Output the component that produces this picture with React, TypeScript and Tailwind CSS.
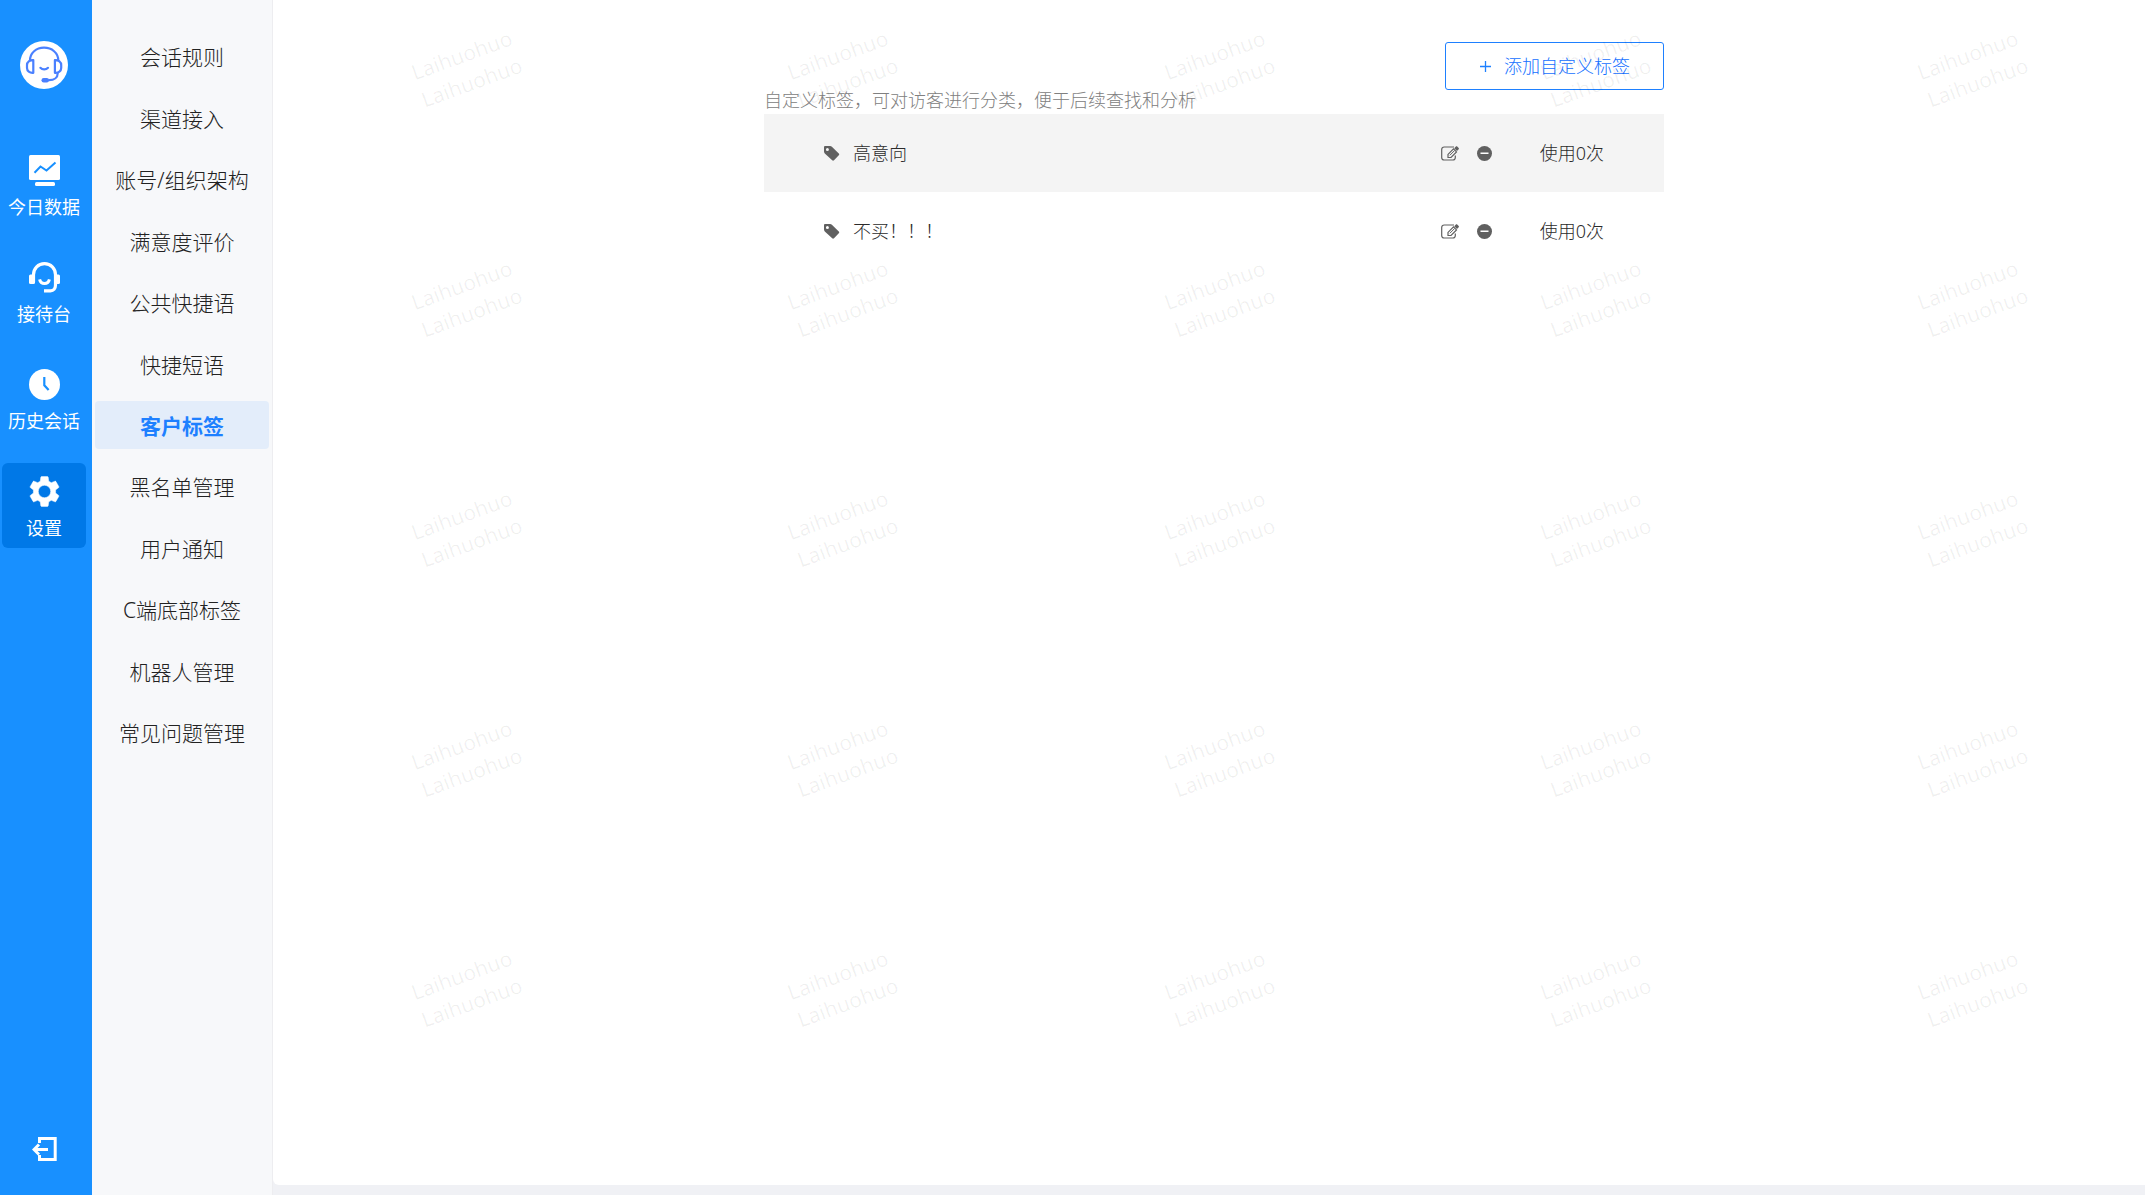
import React from 'react';

const fontStack = "font-['Noto_Sans','Noto_Sans_CJK_SC',sans-serif]";

function AvatarIcon() {
  return (
    <svg viewBox="0 0 48 48" className="size-12" fill="none" aria-hidden="true">
      <circle cx="24" cy="24" r="24" fill="#fff" />
      <g stroke="#4a80ff" strokeWidth="2.200" strokeLinecap="round" strokeLinejoin="round">
        <path d="M10 19.5C10 11.8 16.2 6.7 24 6.7S38.300 11.800 38.300 19.500" />
        <path d="M13.300 19.200v12.600c-3.600.4-6.300-1.800-6.300-4.800v-3c0-3 2.700-5.200 6.300-4.800z" />
        <path d="M34.900 19.200v12.600c3.600.4 6.300-1.800 6.300-4.800v-3c0-3-2.700-5.200-6.300-4.800z" />
        <path d="M20.400 26.800c2 2.200 5.600 2.200 7.600 0" />
        <path d="M37.700 32.200c0 4-3.200 7-8.700 7" />
      </g>
      <rect x="21.500" y="37" width="7.500" height="4.400" rx="2.200" fill="#4a80ff" />
    </svg>
  );
}

function ChartIcon() {
  return (
    <svg viewBox="0 0 31 31" className="size-[31px]" fill="none" aria-hidden="true">
      <rect x="0" y="0" width="31" height="25" rx="1.500" fill="#fff" />
      <rect x="6" y="27" width="20" height="4" rx="1.500" fill="#fff" />
      <path d="M5.500 17.800l6-6.300 6 4L26.500 7.500" stroke="#1890ff" strokeWidth="2" />
    </svg>
  );
}

function HeadsetIcon() {
  return (
    <svg viewBox="0 0 31 31" className="size-[31px]" fill="none" stroke="#fff" aria-hidden="true">
      <path d="M4.500 20V12.800C4.500 6.500 9.200 1.600 15.500 1.600S26.500 6.500 26.500 12.800V23c0 3.500-2 5.800-5 5.800h-6.500" strokeWidth="3.200" />
      <rect x="0" y="12.500" width="6" height="9.500" rx="1.500" fill="#fff" stroke="none" />
      <rect x="25" y="12.500" width="6" height="9.500" rx="1.500" fill="#fff" stroke="none" />
      <path d="M10.600 17.300c.6 2.700 2.500 4.200 4.900 4.200s4.300-1.500 4.900-4.200" strokeWidth="3" />
    </svg>
  );
}

function ClockIcon() {
  return (
    <svg viewBox="0 0 31 31" className="size-[31px]" fill="none" aria-hidden="true">
      <circle cx="15.500" cy="15.500" r="15.500" fill="#fff" />
      <path d="M15.300 8v8.300l4.300 4.800" stroke="#1890ff" strokeWidth="2.200" />
    </svg>
  );
}

function GearIcon() {
  return (
    <svg viewBox="2.2 2 19.600 20" className="size-[31px]" fill="#fff" aria-hidden="true">
      <path d="M19.140 12.940c.04-.3.06-.61.06-.94 0-.32-.02-.64-.07-.94l2.030-1.580c.18-.14.23-.41.12-.61l-1.920-3.320c-.12-.22-.37-.29-.59-.22l-2.390.96c-.5-.38-1.030-.7-1.620-.94l-.36-2.540c-.04-.24-.24-.41-.48-.41h-3.840c-.24 0-.43.17-.47.41l-.36 2.540c-.59.24-1.130.57-1.620.94l-2.390-.96c-.22-.08-.47 0-.59.22L2.740 8.870c-.12.21-.08.47.12.61l2.030 1.580c-.05.3-.09.63-.09.94s.02.64.07.94l-2.030 1.580c-.18.14-.23.41-.12.61l1.920 3.320c.12.22.37.29.59.22l2.390-.96c.5.38 1.030.7 1.620.94l.36 2.540c.05.24.24.41.48.41h3.840c.24 0 .44-.17.47-.41l.36-2.540c.59-.24 1.130-.56 1.620-.94l2.390.96c.22.08.47 0 .59-.22l1.920-3.320c.12-.22.07-.47-.12-.61l-2.010-1.580zM12 16a4 4 0 1 1 0-8 4 4 0 0 1 0 8z" stroke="#fff" strokeWidth=".3" />
    </svg>
  );
}

function LogoutIcon() {
  return (
    <svg viewBox="0 0 25 24" className="h-6 w-[25px]" fill="none" stroke="#fff" aria-hidden="true">
      <path d="M7.500 6V1.500h15.700v21H7.500V18" strokeWidth="3" />
      <path d="M16 12.500H3" strokeWidth="3" />
      <path d="M7 7.500L2 12.500l5 5" strokeWidth="3" />
    </svg>
  );
}

function TagIcon() {
  return (
    <svg viewBox="0 0 16 15" className="h-[15px] w-4 shrink-0" aria-hidden="true">
      <path
        fill="#606060"
        fillRule="evenodd"
        d="M1.200 0H6c.7 0 1.400.3 1.900.8l6.900 6.700c.6.6.6 1.200 0 1.800l-4.800 4.900c-.6.6-1.200.6-1.800 0L.8 7.400C.3 6.900 0 6.200 0 5.500V1.200C0 .5.500 0 1.200 0zM3.400 1.900a1.500 1.500 0 1 0 0 3 1.500 1.500 0 0 0 0-3z"
      />
    </svg>
  );
}

function EditIcon() {
  return (
    <svg viewBox="0 0 19 15" className="h-[15px] w-[19px]" fill="none" stroke="#606060" aria-hidden="true">
      <path d="M13 1H3.200C1.700 1 .7 2 .7 3.500v8c0 1.500 1 2.500 2.500 2.500h8.600c1.500 0 2.500-1 2.500-2.500V9.500" strokeWidth="1.200" />
      <path d="M7 11.500V8.400l5.500-5.500 3 3L10 11.500z" strokeWidth="1.200" />
      <path d="M8.800 9.300l4.700-4.700" strokeWidth="1" />
      <path d="M13.200 2.200l1.700-1.700c.4-.4.900-.4 1.300 0l1.500 1.500c.4.4.4.900 0 1.300L16 5z" fill="#606060" stroke="none" />
    </svg>
  );
}

function MinusIcon() {
  return (
    <svg viewBox="0 0 15 15" className="size-[15px]" aria-hidden="true">
      <circle cx="7.500" cy="7.500" r="7.500" fill="#606060" />
      <rect x="3.500" y="6.500" width="8" height="1.500" fill="#fff" />
    </svg>
  );
}

const navItems = [
  { label: '今日数据', icon: <ChartIcon /> },
  { label: '接待台', icon: <HeadsetIcon /> },
  { label: '历史会话', icon: <ClockIcon /> },
  { label: '设置', icon: <GearIcon />, active: true },
];

const menuItems = [
  '会话规则',
  '渠道接入',
  '账号/组织架构',
  '满意度评价',
  '公共快捷语',
  '快捷短语',
  '客户标签',
  '黑名单管理',
  '用户通知',
  'C端底部标签',
  '机器人管理',
  '常见问题管理',
];

const tags = [
  { name: '高意向', count: 0 },
  { name: '不买！！！', count: 0 },
];

function Watermark() {
  return (
    <div
      aria-hidden="true"
      className="pointer-events-none absolute inset-y-0 left-0 -right-2.5 grid grid-cols-5 content-start select-none"
    >
      {Array.from({ length: 25 }, (_, i) => (
        <div key={i} className="flex h-[230px] items-start pt-10 pl-[141px]">
          <div className="-rotate-20 text-[21px] leading-[29px] font-normal text-black/6">
            Laihuohuo
            <br />
            Laihuohuo
          </div>
        </div>
      ))}
    </div>
  );
}

export default function App() {
  return (
    <div className={`flex min-h-screen bg-[#f0f1f5] font-light ${fontStack}`}>
      <nav className="flex w-[92px] shrink-0 flex-col items-center bg-[#1890ff] pt-[41px] pr-1.5 pb-[34px] pl-0.5">
        <AvatarIcon />
        <div className="mt-[53px] flex w-full flex-col gap-[22px]">
          {navItems.map((item) => (
            <a
              key={item.label}
              href="#"
              className={`flex h-[85px] flex-col items-center rounded-md pt-[13px] text-lg leading-6 font-normal whitespace-nowrap text-white ${
                item.active ? 'bg-[#0078e7]' : ''
              }`}
            >
              {item.icon}
              <span className="mt-[9px]">{item.label}</span>
            </a>
          ))}
        </div>
        <button type="button" aria-label="退出" className="mt-auto">
          <LogoutIcon />
        </button>
      </nav>

      <aside className="w-[181px] shrink-0 border-r border-[#ededf0] bg-[#f7f8fa] px-[3px] pt-8">
        <ul className="flex min-h-[724px] flex-col justify-between">
          {menuItems.map((label) => (
            <li key={label}>
              <a
                href="#"
                className={`flex h-12 items-center justify-center rounded-sm pt-1 text-[21px] whitespace-nowrap ${
                  label === '客户标签' ? 'bg-[#e3edfa] font-bold text-[#1e80ff]' : 'text-[#222]'
                }`}
              >
                {label}
              </a>
            </li>
          ))}
        </ul>
      </aside>

      <main className="relative mb-2.5 flex-1 overflow-hidden rounded-bl-md bg-white pt-[42px] pl-2.5">
        <section className="mx-auto flex w-full max-w-[900px] flex-col">
          <button
            type="button"
            className="flex h-12 items-center gap-3 self-end rounded-[3px] border border-[#1e80ff] px-[33px] text-lg font-light text-[#1470ff]"
          >
            <svg viewBox="0 0 13 13" className="size-[13px]" stroke="#1e80ff" strokeWidth="1.300" aria-hidden="true">
              <path d="M6.500 1v11M1 6.500h11" />
            </svg>
            添加自定义标签
          </button>
          <p className="pb-1 text-lg leading-5 text-[#808080]">自定义标签，可对访客进行分类，便于后续查找和分析</p>
          <ul>
            {tags.map((tag) => (
              <li key={tag.name} className="flex h-[78px] items-center pr-[60px] pl-[60px] text-lg text-[#2b2b2b] odd:bg-[#f4f4f4]">
                <TagIcon />
                <span className="ml-[13px]">{tag.name}</span>
                <div className="ml-auto flex items-center">
                  <button type="button" aria-label="编辑">
                    <EditIcon />
                  </button>
                  <button type="button" aria-label="删除" className="ml-[17px]">
                    <MinusIcon />
                  </button>
                  <span className="ml-12">使用{tag.count}次</span>
                </div>
              </li>
            ))}
          </ul>
        </section>
        <Watermark />
      </main>
    </div>
  );
}
